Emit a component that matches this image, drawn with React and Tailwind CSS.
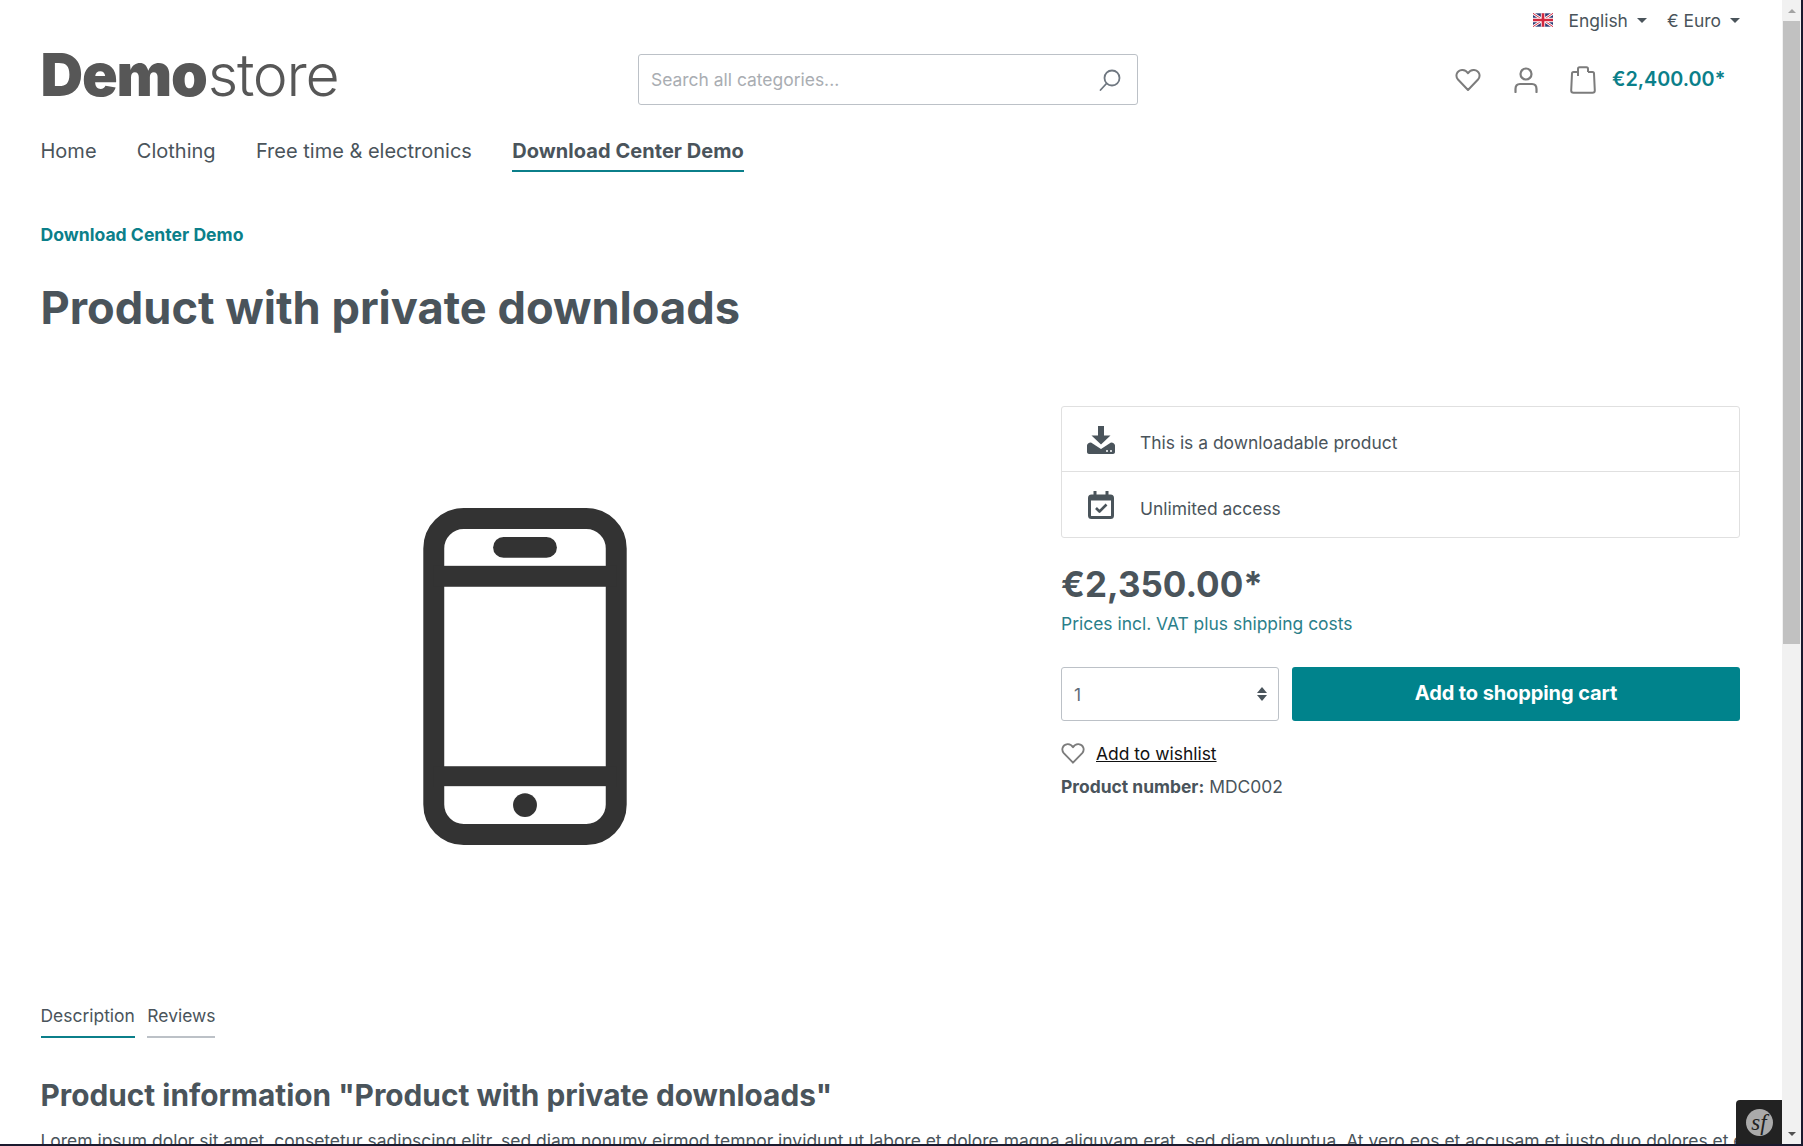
import React from "react";

const Heart = ({ className }) => (
  <svg viewBox="0 0 26 24" className={className} fill="none" stroke="currentColor" strokeWidth="2" strokeLinejoin="round">
    <path d="M13 22 L3 11.5 C0.2 8.3 1.2 2.5 7 1.9 C9.6 1.7 11.8 3.2 13 5.2 C14.2 3.2 16.4 1.7 19 1.9 C24.8 2.5 25.8 8.3 23 11.5 Z" />
  </svg>
);

const Flag = () => (
  <svg viewBox="0 0 60 40" className="w-[20px] h-[14px]">
    <rect width="60" height="40" fill="#2b3a73" />
    <path d="M0 0L60 40M60 0L0 40" stroke="#fff" strokeWidth="8" />
    <path d="M0 0L60 40M60 0L0 40" stroke="#d3283f" strokeWidth="3" />
    <path d="M30 0V40M0 20H60" stroke="#fff" strokeWidth="13" />
    <path d="M30 0V40M0 20H60" stroke="#d3283f" strokeWidth="8" />
  </svg>
);

const Caret = () => <span className="ml-[9px] w-0 h-0 border-x-[5px] border-x-transparent border-t-[5px] border-t-[#4a545b]" />;

function Scrollbar() {
  return (
    <div className="w-[19px] shrink-0 bg-[#f1f1f1] flex flex-col items-center">
      <div className="h-[21px] w-full flex items-center justify-center">
        <span className="w-0 h-0 border-x-[4px] border-x-transparent border-b-[4px] border-b-[#a3a3a3]" />
      </div>
      <div className="w-[17px] h-[623px] bg-[#c1c1c1]" />
      <div className="flex-1" />
      <div className="h-[21px] w-full flex items-center justify-center">
        <span className="w-0 h-0 border-x-[4px] border-x-transparent border-t-[4px] border-t-[#505050]" />
      </div>
    </div>
  );
}

export default function App() {
  return (
    <div className="h-[1146px] w-[1803px] overflow-hidden bg-white flex flex-col font-['Inter',sans-serif] text-[17.45px] leading-[27px] text-[#4a545b]">
      <div className="flex flex-1 min-h-0">
        <div className="relative w-[1782px] shrink-0 overflow-hidden pl-[40.5px] pr-[42px]">
          {/* top bar */}
          <div className="h-[40px] flex items-center justify-end pr-0">
            <Flag />
            <span className="ml-[15px]">English</span>
            <Caret />
            <span className="ml-[20px]">€ Euro</span>
            <Caret />
          </div>
          {/* header */}
          <div className="mt-[14px] h-[51px] flex items-center">
            <div className="w-[597.5px] -mt-[11px] text-[#575757] text-[59px] leading-[51px] tracking-[-1.2px] whitespace-nowrap">
              <span className="font-black">Demo</span><span className="font-light ml-[1px]">store</span>
            </div>
            <div className="w-[500px] h-[51px] border border-[#bcc1c7] rounded-[3px] flex items-center pl-[12px] pr-[15px]">
              <input readOnly placeholder="Search all categories..." className="flex-1 min-w-0 outline-none bg-transparent placeholder:text-[#a9adb2]" />
              <svg viewBox="0 0 24 24" className="w-[24px] h-[24px] text-[#6f7780]" fill="none" stroke="currentColor" strokeWidth="1.8" strokeLinecap="round">
                <circle cx="14" cy="10" r="7.5" />
                <path d="M8.5 15.5L2.5 22" />
              </svg>
            </div>
            <div className="ml-[317px] flex items-center text-[#798490]">
              <Heart className="w-[26px] h-[24px] text-[#7c7c7c]" />
              <svg viewBox="0 0 24 26" className="ml-[33px] w-[24px] h-[26px] text-[#7c7c7c]" fill="none" stroke="currentColor" strokeWidth="2.2" strokeLinecap="round">
                <circle cx="12" cy="7" r="5.5" />
                <path d="M1.5 25V22C1.5 18.5 3.5 17 6 17H18C20.5 17 22.5 18.5 22.5 22V25" />
              </svg>
              <svg viewBox="0 0 26 28" className="ml-[32px] w-[26px] h-[28px] text-[#7c7c7c]" fill="none" stroke="currentColor" strokeWidth="2" strokeLinejoin="round">
                <path d="M8 6H3.5C2.5 6 2 6.5 2 7.5L1.2 24.5C1.2 26 2 26.7 3.5 26.7H22.5C24 26.7 24.8 26 24.8 24.5L24 7.5C24 6.5 23.5 6 22.5 6H18" />
                <path d="M8 10V3C8 2 8.5 1.3 9.5 1.3H16.5C17.5 1.3 18 2 18 3V6" />
              </svg>
              <span className="ml-[16px] text-[19.8px] font-semibold text-[#0b7f8a] whitespace-nowrap">€2,400.00*</span>
            </div>
          </div>
          {/* nav */}
          <nav className="mt-[33px] flex gap-[40.3px] text-[20px] leading-[27px]">
            <a className="pb-[7px]">Home</a>
            <a className="pb-[7px]">Clothing</a>
            <a className="pb-[7px]">Free time &amp; electronics</a>
            <a className="pb-[5px] font-bold tracking-[0.05px] border-b-2 border-[#0b7f8a]">Download Center Demo</a>
          </nav>
          {/* breadcrumb */}
          <div className="mt-[49px] font-bold text-[17.6px] text-[#0b7f8a]">Download Center Demo</div>
          <h1 className="mt-[33px] text-[45.2px] leading-[53px] font-bold">Product with private downloads</h1>
          {/* main */}
          <div className="mt-[72px] h-[540px] flex">
            <div className="w-[968.5px] h-full flex items-center justify-center">
              <svg viewBox="0 0 204 338" className="w-[204px] h-[337px]">
                <rect x="10.5" y="10.5" width="183" height="317" rx="30" fill="none" stroke="#333333" strokeWidth="21" />
                <rect x="10" y="58" width="184" height="21" fill="#333333" />
                <rect x="10" y="259" width="184" height="20" fill="#333333" />
                <rect x="70" y="29" width="64" height="21" rx="10.5" fill="#333333" />
                <circle cx="102" cy="298" r="12" fill="#333333" />
              </svg>
            </div>
            <div className="ml-[52px] flex-1">
              <div className="border border-[#e0e0e0] rounded-[3px] h-[132px] flex flex-col">
                <div className="h-[65px] flex items-center border-b border-[#e0e0e0]">
                  <div className="w-[78px] pl-[25px] mt-[2px]">
                    <svg viewBox="0 0 28 28" className="w-[28px] h-[28px] text-[#4a545b]" fill="currentColor">
                      <path d="M11 0H17V9.5H23.5L14 18.5L4.5 9.5H11Z" />
                      <path d="M4 16.5L14 23L24 16.5C26.5 16.5 28 18 28 19.5V26C28 27 27 28 26 28H2C1 28 0 27 0 26V19.5C0 18 1.5 16.5 4 16.5Z" />
                      <circle cx="20" cy="25" r="1" fill="#fff" />
                      <circle cx="24" cy="25" r="1" fill="#fff" />
                    </svg>
                  </div>
                  <span className="pt-[7px]">This is a downloadable product</span>
                </div>
                <div className="flex-1 flex items-center">
                  <div className="w-[78px] pl-[26px]">
                    <svg viewBox="0 0 26 28" className="w-[26px] h-[28px] text-[#4a545b]" fill="none" stroke="currentColor" strokeWidth="3" strokeLinejoin="round">
                      <rect x="1.5" y="5" width="23" height="21.5" rx="2" />
                      <path d="M1.5 7H24.5" strokeWidth="5" />
                      <path d="M7 0V4M19 0V4" />
                      <path d="M8 17L11.5 20.5L18.5 13.5" strokeWidth="2.6" />
                    </svg>
                  </div>
                  <span className="pt-[7px]">Unlimited access</span>
                </div>
              </div>
              <div className="mt-[24px] text-[35px] leading-[44px] font-bold">€2,350.00*</div>
              <div className="mt-[4px] text-[#2b7f8a]">Prices incl. VAT plus shipping costs</div>
              <div className="mt-[30px] flex gap-[13px]">
                <div className="w-[218px] h-[54px] border border-[#bcc1c7] rounded-[3px] flex items-center justify-between pl-[12px] pr-[11px] text-[#5f6b78]">
                  <span>1</span>
                  <span className="flex flex-col gap-[2px]">
                    <span className="w-0 h-0 border-x-[5px] border-x-transparent border-b-[6px] border-b-[#4a545b]" />
                    <span className="w-0 h-0 border-x-[5px] border-x-transparent border-t-[6px] border-t-[#4a545b]" />
                  </span>
                </div>
                <button className="flex-1 h-[54px] pb-[2px] rounded-[3px] bg-[#00838c] text-white text-[20px] font-bold -tracking-[0.1px]">Add to shopping cart</button>
              </div>
              <div className="mt-[19px] flex items-center">
                <Heart className="w-[24px] h-[23px] text-[#7c7c7c]" />
                <a className="ml-[11px] text-[#111] underline">Add to wishlist</a>
              </div>
              <div className="mt-[6px]"><span className="font-bold">Product number:</span> MDC002</div>
            </div>
          </div>
          {/* tabs */}
          <div className="mt-[56px] flex gap-[12.5px]">
            <div className="pb-[7px] border-b-2 border-[#0b7f8a]">Description</div>
            <div className="pb-[7px] border-b-2 border-[#bcc1c7]">Reviews</div>
          </div>
          <h2 className="mt-[39px] text-[29.8px] leading-[36px] font-bold">Product information "Product with private downloads"</h2>
          <p className="mt-[14px] whitespace-nowrap">Lorem ipsum dolor sit amet, consetetur sadipscing elitr, sed diam nonumy eirmod tempor invidunt ut labore et dolore magna aliquyam erat, sed diam voluptua. At vero eos et accusam et justo duo dolores et ea rebum.</p>
          {/* symfony toolbar */}
          <div className="absolute right-0 bottom-0 w-[46px] h-[44px] bg-[#222222] rounded-tl-[4px] flex items-center justify-center">
            <span className="w-[27px] h-[27px] rounded-full bg-[#aaaaaa] flex items-center justify-center font-['Liberation_Serif',serif] italic text-[23px] leading-none text-[#222222]">sf</span>
          </div>
        </div>
        <Scrollbar />
        <div className="w-[2px] shrink-0 bg-[#1a1a2e]" />
      </div>
      <div className="h-[2px] shrink-0 bg-[#1a1a2e]" />
    </div>
  );
}
